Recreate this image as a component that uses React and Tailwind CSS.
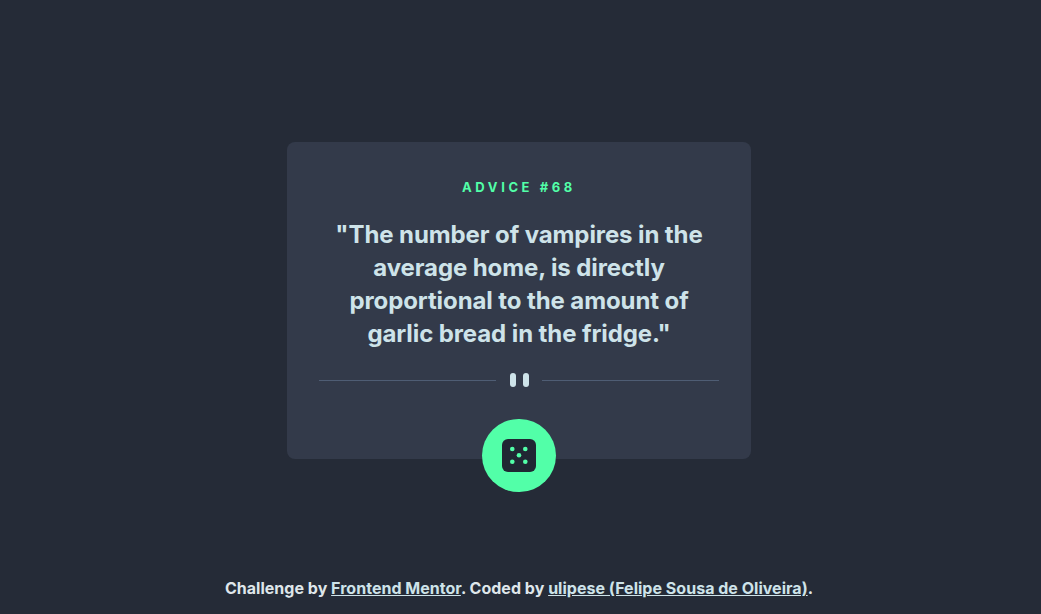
export default function App() {
  return (
    <div className="flex flex-col items-center h-[614px] pr-[3px] bg-[#252b37] font-['Inter','Noto_Sans',sans-serif] overflow-hidden">
      <main className="flex-1 flex items-start pt-[142px]">
        {/* Card */}
        <div className="relative flex flex-col items-center w-[464px] h-[317px] px-8 pt-[38px] rounded-[8px] bg-[#333a4a]">
          <h1 className="text-[13px] leading-[15px] font-bold tracking-[3.6px] text-[#52ffa8]">ADVICE #68</h1>
          <p className="mt-[23px] w-[400px] text-center text-[24px] leading-[33px] font-bold tracking-[-0.1px] text-[#cee3e9]">
            "The number of vampires in the average home, is directly proportional to the amount of garlic bread in the fridge."
          </p>

          {/* Divider */}
          <div className="flex items-center w-full mt-[23px]">
            <div className="flex-1 h-px bg-[#4f5d74]" />
            <div className="flex gap-[7px] ml-[14px] mr-[13px]">
              <span className="w-[6px] h-[14px] rounded-[3px] bg-[#cee3e9]" />
              <span className="w-[6px] h-[14px] rounded-[3px] bg-[#cee3e9]" />
            </div>
            <div className="flex-1 h-px bg-[#4f5d74]" />
          </div>

          {/* Dice button */}
          <button className="absolute left-[195px] top-[277px] flex items-center justify-center w-[74px] h-[73px] rounded-full bg-[#52ffa8]">
            <svg width="34" height="33" viewBox="0 0 34 33">
              <rect width="34" height="33" rx="6" fill="#202733" />
              <circle cx="10.3" cy="10" r="2.3" fill="#52ffa8" />
              <circle cx="23.3" cy="10" r="2.3" fill="#52ffa8" />
              <circle cx="17" cy="16.3" r="2.3" fill="#52ffa8" />
              <circle cx="10.3" cy="22.7" r="2.3" fill="#52ffa8" />
              <circle cx="23.3" cy="22.7" r="2.3" fill="#52ffa8" />
            </svg>
          </button>
        </div>
      </main>

      <footer className="pb-[16px] text-[16px] leading-5 font-bold tracking-[0.02px] text-[#dfe6ea]">
        Challenge by <a className="underline text-[#cee3e9]">Frontend Mentor</a>. Coded by <a className="underline text-[#cee3e9]">ulipese (Felipe Sousa de Oliveira)</a>.
      </footer>
    </div>
  );
}
